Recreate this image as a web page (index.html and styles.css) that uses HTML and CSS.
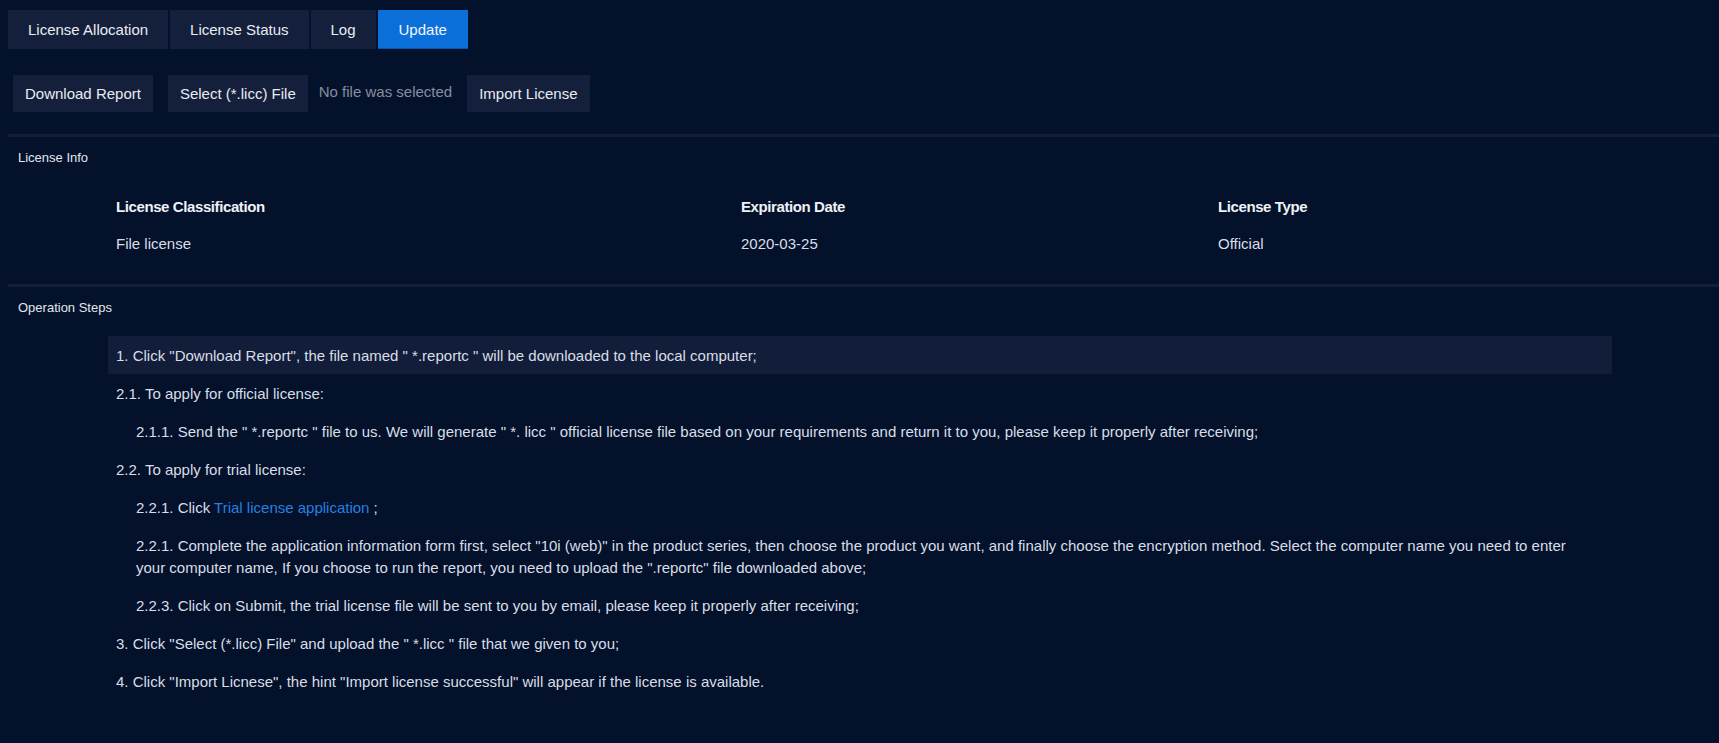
FILE: index.html
```html
<!DOCTYPE html>
<html lang="en">
<head>
<meta charset="utf-8">
<title>License Update</title>
<link rel="stylesheet" href="styles.css">
</head>
<body>
<div class="page">
  <nav class="tabs">
    <div class="tab">License Allocation</div>
    <div class="tab">License Status</div>
    <div class="tab">Log</div>
    <div class="tab active">Update</div>
  </nav>

  <div class="toolbar">
    <button class="btn">Download Report</button>
    <button class="btn">Select (*.licc) File</button>
    <span class="file-name">No file was selected</span>
    <button class="btn">Import License</button>
  </div>

  <section class="section">
    <h2 class="section-title">License Info</h2>
    <div class="info-grid">
      <div class="cell head">License Classification</div>
      <div class="cell head">Expiration Date</div>
      <div class="cell head">License Type</div>
      <div class="cell">File license</div>
      <div class="cell">2020-03-25</div>
      <div class="cell">Official</div>
    </div>
  </section>

  <section class="section">
    <h2 class="section-title">Operation Steps</h2>
    <div class="steps">
      <p class="step highlight">1. Click "Download Report", the file named " *.reportc " will be downloaded to the local computer;</p>
      <p class="step">2.1. To apply for official license:</p>
      <p class="step sub">2.1.1. Send the " *.reportc " file to us. We will generate " *. licc " official license file based on your requirements and return it to you, please keep it properly after receiving;</p>
      <p class="step">2.2. To apply for trial license:</p>
      <p class="step sub">2.2.1. Click <a class="link" href="#">Trial license application</a> ;</p>
      <p class="step sub">2.2.1. Complete the application information form first, select "10i (web)" in the product series, then choose the product you want, and finally choose the encryption method. Select the computer name you need to enter<br>your computer name, If you choose to run the report, you need to upload the ".reportc" file downloaded above;</p>
      <p class="step sub">2.2.3. Click on Submit, the trial license file will be sent to you by email, please keep it properly after receiving;</p>
      <p class="step">3. Click "Select (*.licc) File" and upload the " *.licc " file that we given to you;</p>
      <p class="step">4. Click "Import Licnese", the hint "Import license successful" will appear if the license is available.</p>
    </div>
  </section>
</div>
</body>
</html>
```

FILE: styles.css
```css
html, body {
  margin: 0;
  padding: 0;
  background: #03112b;
  height: 100%;
}

body {
  font-family: "Liberation Sans", Arial, sans-serif;
  font-size: 15px;
  color: #d9dee6;
}

.page {
  padding: 10px 0 0 8px;
}

.tabs {
  display: flex;
  gap: 2px;
}

.tab {
  height: 39px;
  line-height: 39px;
  padding: 0 20px;
  background: #141f3b;
  color: #e8ecf2;
  box-sizing: border-box;
}

.tab.active {
  background: #0a6fd8;
  border-bottom: 1px solid #0b55a6;
  color: #f2f6fb;
  padding: 0 21px;
}

.toolbar {
  display: flex;
  align-items: center;
  gap: 15px;
  margin-top: 26px;
  padding-left: 5px;
}

.btn {
  height: 37px;
  padding: 0 12px;
  border: none;
  background: #141f3b;
  color: #e8ecf2;
  font-family: inherit;
  font-size: 15px;
}

.file-name {
  color: #858da0;
  margin-left: -4px;
  padding-bottom: 5px;
}

.section {
  border-top: 3px solid #141e39;
  padding-top: 13px;
}

.section + .section {
  margin-top: 0;
}

.toolbar + .section {
  margin-top: 22px;
}

.section-title {
  margin: 0 0 0 10px;
  font-size: 13px;
  line-height: 16px;
  font-weight: normal;
  color: #e2e6ec;
}

.info-grid {
  display: grid;
  grid-template-columns: 625px 477px 402px;
  row-gap: 15px;
  margin: 30px 0 29px 100px;
  line-height: 22px;
}

.cell {
  padding: 0 8px;
}

.cell.head {
  font-weight: bold;
  letter-spacing: -0.4px;
  color: #eef1f5;
}

.steps {
  width: 1504px;
  margin: 20px 0 0 100px;
  padding-bottom: 40px;
}

.step {
  margin: 0;
  padding: 9px 8px 7px 8px;
  line-height: 22px;
}

.step.sub {
  padding-left: 28px;
  padding-right: 0;
}

.step.highlight {
  background: #121d39;
}

.link {
  color: #2a7fe0;
  text-decoration: none;
}
```
